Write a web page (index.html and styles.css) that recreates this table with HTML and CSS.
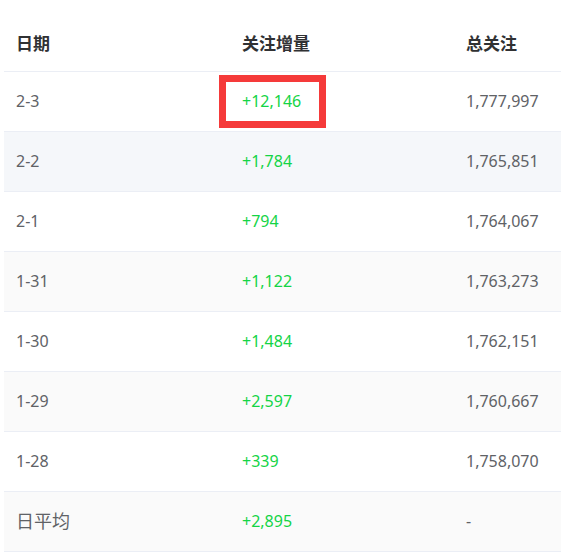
FILE: index.html
```html
<!DOCTYPE html>
<html lang="zh-CN">
<head>
<meta charset="UTF-8" />
<meta name="viewport" content="width=device-width, initial-scale=1" />
<title>关注增量</title>
<link rel="stylesheet" href="styles.css">
</head>
<body>
<div class="table-wrap">
  <table class="fans-table">
    <colgroup>
      <col class="col-date">
      <col class="col-inc">
      <col class="col-total">
    </colgroup>
    <thead>
      <tr>
        <th>日期</th>
        <th>关注增量</th>
        <th>总关注</th>
      </tr>
    </thead>
    <tbody>
      <tr>
        <td>2-3</td>
        <td class="up">+12,146</td>
        <td>1,777,997</td>
      </tr>
      <tr class="hover">
        <td>2-2</td>
        <td class="up">+1,784</td>
        <td>1,765,851</td>
      </tr>
      <tr>
        <td>2-1</td>
        <td class="up">+794</td>
        <td>1,764,067</td>
      </tr>
      <tr class="striped">
        <td>1-31</td>
        <td class="up">+1,122</td>
        <td>1,763,273</td>
      </tr>
      <tr>
        <td>1-30</td>
        <td class="up">+1,484</td>
        <td>1,762,151</td>
      </tr>
      <tr class="striped">
        <td>1-29</td>
        <td class="up">+2,597</td>
        <td>1,760,667</td>
      </tr>
      <tr>
        <td>1-28</td>
        <td class="up">+339</td>
        <td>1,758,070</td>
      </tr>
      <tr class="striped">
        <td class="avg">日平均</td>
        <td class="up">+2,895</td>
        <td>-</td>
      </tr>
    </tbody>
  </table>
  <!-- annotation box over the first increment -->
  <div class="mark" aria-hidden="true"></div>
</div>
</body>
</html>
```

FILE: styles.css
```css
* {
  box-sizing: border-box;
}
html, body {
  margin: 0;
  padding: 0;
  background: #ffffff;
  overflow: hidden;
}
body {
  font-family: 'Noto Sans', 'Noto Sans CJK SC', sans-serif;
  font-size: 16px;
  color: #606266;
}

.table-wrap {
  position: relative;
  margin-left: 4px;
  padding-top: 16px;
  overflow: hidden;
}

.fans-table {
  width: 660px;
  border-collapse: collapse;
  table-layout: fixed;
}
.col-date { width: 226px; }
.col-inc { width: 224px; }
.col-total { width: 210px; }

.fans-table th,
.fans-table td {
  text-align: left;
  padding: 0 12px;
  border-bottom: 1px solid #ebeef5;
}

.fans-table th {
  height: 55px;
  padding-bottom: 2px;
  color: #303133;
  font-weight: bold;
  font-size: 17px;
}

.fans-table td {
  height: 60px;
  line-height: 1;
}

.fans-table tr.striped td {
  background: #fafafa;
}
.fans-table tr.hover td {
  background: #f5f7fa;
}

.fans-table td.up {
  color: #14d446;
}
.fans-table td.avg {
  font-size: 18px;
}

/* red highlight box */
.mark {
  position: absolute;
  left: 215px;
  top: 75px;
  width: 107px;
  height: 53px;
  border: 7px solid #f53a3a;
}
```
